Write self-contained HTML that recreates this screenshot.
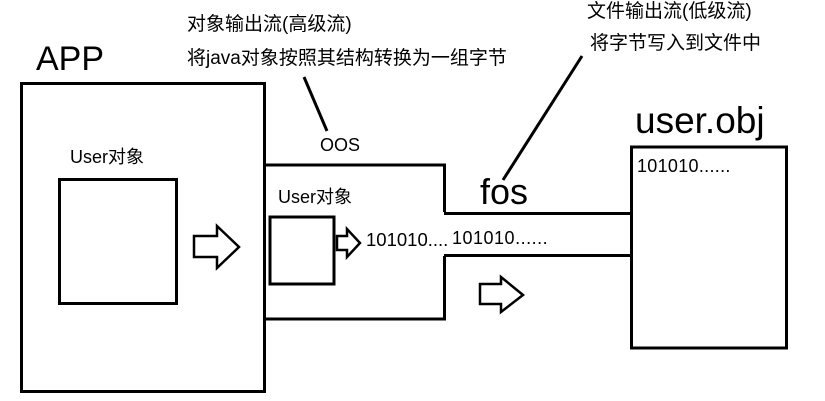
<!DOCTYPE html>
<html><head><meta charset="utf-8"><style>
html,body{margin:0;padding:0;background:#fff;}
body{width:825px;height:401px;position:relative;overflow:hidden;font-family:"Liberation Sans","Noto Sans CJK SC",sans-serif;color:#000;}
.t{position:absolute;white-space:nowrap;line-height:1;}
svg{position:absolute;left:0;top:0;}
</style></head><body>
<svg width="825" height="401" viewBox="0 0 825 401">
<g fill="none" stroke="#000" stroke-width="3">
<rect x="21.5" y="83.5" width="243" height="308"/>
<rect x="59.5" y="179.5" width="117" height="124"/>
<polyline points="265,165 444.5,165 444.5,212"/>
<polyline points="444.5,256 444.5,319 265,319"/>
<rect x="270" y="217" width="64" height="67"/>
<line x1="444" y1="213.5" x2="631" y2="213.5"/>
<line x1="444" y1="255.5" x2="631" y2="255.5"/>
<rect x="631.5" y="147" width="155" height="201"/>
<line x1="304" y1="77" x2="327" y2="131"/>
<line x1="582" y1="56" x2="503" y2="180"/>
</g>
<g fill="none" stroke="#000" stroke-width="2.5" stroke-linejoin="miter">
<polygon points="194,236 217,236 217,226 239,247 217,268 217,257 194,257"/>
<polygon points="337,236 347,236 347,229 360,243 347,257 347,250 337,250"/>
<polygon points="480,284 501,284 501,277 523,295 501,312 501,304 480,304"/>
</g>
</svg>
<div class="t" style="left:36px;top:42px;font-size:34px;">APP</div>
<div class="t" style="left:70px;top:148px;font-size:18px;">User对象</div>
<div class="t" style="left:278px;top:188px;font-size:18px;">User对象</div>
<div class="t" style="left:366px;top:231px;font-size:18.5px;">101010....</div>
<div class="t" style="left:452px;top:229px;font-size:18px;letter-spacing:0.5px;">101010......</div>
<div class="t" style="left:320px;top:136px;font-size:18px;">OOS</div>
<div class="t" style="left:480px;top:174px;font-size:36px;">fos</div>
<div class="t" style="left:635px;top:102px;font-size:37px;">user.obj</div>
<div class="t" style="left:637px;top:157px;font-size:18px;letter-spacing:0.3px;">101010......</div>
<div class="t" style="left:187px;top:15px;font-size:19px;">对象输出流(高级流)</div>
<div class="t" style="left:187px;top:49px;font-size:19px;">将java对象按照其结构转换为一组字节</div>
<div class="t" style="left:587px;top:2px;font-size:19px;">文件输出流(低级流)</div>
<div class="t" style="left:590px;top:34px;font-size:19px;">将字节写入到文件中</div>
</body></html>
